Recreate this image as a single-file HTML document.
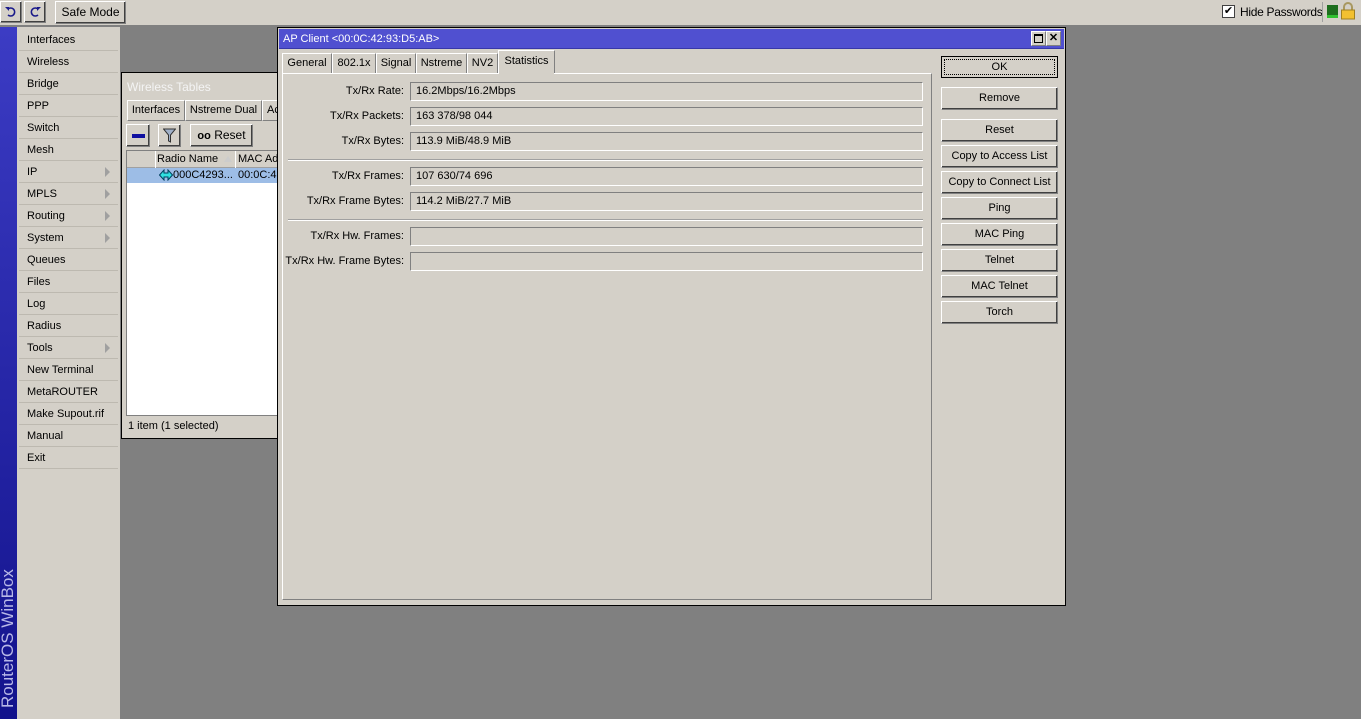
<!DOCTYPE html>
<html><head><meta charset="utf-8"><style>
*{box-sizing:border-box;margin:0;padding:0}
body{width:1361px;height:719px;overflow:hidden;background:#808080;font-family:"Liberation Sans",sans-serif;font-size:11px;color:#000;position:relative}
.abs{position:absolute}
.btn{position:absolute;background:#d4d0c8;border:1px solid;border-color:#fff #808080 #808080 #fff;box-shadow:inset -1px -1px 0 #404040;text-align:center;line-height:19px;white-space:nowrap}
.face{background:#d4d0c8}
.sunk{position:absolute;border:1px solid;border-color:#808080 #fff #fff #808080;background:#d4d0c8;padding-left:5px;line-height:16px;height:19px}
.lbl{position:absolute;text-align:right;width:200px;line-height:18px;white-space:nowrap}
.menu div{height:22px;line-height:22px;padding-left:8px;border-bottom:1px solid #bdb9b0;position:relative}
.menu span.ar{position:absolute;right:8px;top:6px;width:0;height:0;border-left:5px solid #a0a0a0;border-top:5px solid transparent;border-bottom:5px solid transparent}
.tab{position:absolute;border:1px solid;border-color:#fff #808080 #808080 #fff;line-height:19px;height:21px;background:#d4d0c8;text-align:center;white-space:nowrap;overflow:hidden}
</style></head><body>
<!-- top bar -->
<div class="abs face" style="left:0;top:0;width:1361px;height:26px;border-bottom:1px solid #808080"></div>
<div class="btn" style="left:0;top:1px;width:22px;height:22px"><svg width="14" height="14" viewBox="0 0 14 14" style="margin-top:3px"><path d="M4 4 A4 4 0 1 1 4 10" fill="none" stroke="#1a1a8a" stroke-width="1.6"/><path d="M1 2 L5 2 L5 6 Z" fill="#1a1a8a"/></svg></div>
<div class="btn" style="left:24px;top:1px;width:22px;height:22px"><svg width="14" height="14" viewBox="0 0 14 14" style="margin-top:3px"><path d="M10 4 A4 4 0 1 0 10 10" fill="none" stroke="#1a1a8a" stroke-width="1.6"/><path d="M13 2 L9 2 L9 6 Z" fill="#1a1a8a"/></svg></div>
<div class="btn" style="left:55px;top:1px;width:71px;height:23px;line-height:21px;font-size:12px">Safe Mode</div>
<div class="abs" style="left:1222px;top:5px;width:13px;height:13px;border:1px solid #404040;background:#fff;font-size:11px;line-height:11px;text-align:center">&#10004;</div>
<div class="abs" style="left:1240px;top:5px;font-size:12px;letter-spacing:-0.3px">Hide Passwords</div>
<div class="abs" style="left:1322px;top:2px;width:1px;height:20px;background:#a0a0a0"></div>
<div class="abs" style="left:1327px;top:5px;width:11px;height:13px;background:#1e6e1e;border-bottom:3px solid #30c030"></div>
<svg class="abs" style="left:1340px;top:2px" width="16" height="18" viewBox="0 0 16 18"><path d="M4 8 V5 A4 4 0 0 1 12 5 V8" fill="none" stroke="#a89860" stroke-width="2"/><rect x="1.5" y="8" width="13" height="9" fill="#f2c030" stroke="#a08020"/></svg>
<!-- side strip -->
<div class="abs" style="left:0;top:27px;width:17px;height:692px;background:linear-gradient(#3c3cc4,#12128c)"></div>
<div class="abs" style="left:-4px;top:708px;transform:rotate(-90deg);transform-origin:0 0;color:#b8b8e8;font-size:17px;white-space:nowrap;width:200px;line-height:24px">RouterOS WinBox</div>
<!-- menu -->
<div class="abs face menu" style="left:17px;top:27px;width:104px;height:692px;padding:2px 2px 0 2px;border-right:1px solid #808080">
<div>Interfaces</div><div>Wireless</div><div>Bridge</div><div>PPP</div><div>Switch</div><div>Mesh</div><div>IP<span class="ar"></span></div><div>MPLS<span class="ar"></span></div><div>Routing<span class="ar"></span></div><div>System<span class="ar"></span></div><div>Queues</div><div>Files</div><div>Log</div><div>Radius</div><div>Tools<span class="ar"></span></div><div>New Terminal</div><div>MetaROUTER</div><div>Make Supout.rif</div><div>Manual</div><div>Exit</div>
</div>
<!-- wireless tables -->
<div class="abs face" style="left:121px;top:72px;width:170px;height:367px;border:1px solid #000;border-right:none">
 <div class="abs" style="left:5px;top:7px;color:#f4f4f4;font-size:12px">Wireless Tables</div>
 <div class="tab" style="left:5px;top:27px;width:58px">Interfaces</div>
 <div class="tab" style="left:63px;top:27px;width:77px">Nstreme Dual</div>
 <div class="tab" style="left:140px;top:27px;width:20px;text-align:left;padding-left:4px">Ac</div>
 <div class="btn" style="left:4px;top:51px;width:24px;height:23px"><div style="margin:9px auto;width:13px;height:4px;background:#1010a0"></div></div>
 <div class="btn" style="left:36px;top:51px;width:23px;height:23px"><svg width="13" height="15" viewBox="0 0 13 15" style="margin-top:3px"><path d="M0.5 1 H12.5 L7.5 7 V14 L5.5 13 V7 Z" fill="#a0b0c8" stroke="#303030"/></svg></div>
 <div class="btn" style="left:68px;top:51px;width:63px;height:23px;line-height:21px;font-size:12px"><b style="font-size:11px">oo</b> Reset</div>
 <div class="abs" style="left:4px;top:77px;width:160px;height:266px;background:#fff;border:1px solid #808080"></div>
 <div class="abs" style="left:5px;top:78px;width:160px;height:17px;background:#d4d0c8;border-bottom:1px solid #a0a0a0"></div>
 <div class="abs" style="left:33px;top:78px;width:1px;height:33px;background:#fff"></div>
 <div class="abs" style="left:35px;top:80px">Radio Name</div>
 <div class="abs" style="left:102px;top:83px;width:0;height:0;border-left:4px solid transparent;border-right:4px solid transparent;border-bottom:6px solid #ccc"></div>
 <div class="abs" style="left:113px;top:78px;width:1px;height:33px;background:#fff"></div>
 <div class="abs" style="left:116px;top:80px">MAC Add</div>
 <div class="abs" style="left:5px;top:95px;width:160px;height:15px;background:#9dbde6"></div>
 <svg class="abs" style="left:37px;top:96px" width="14" height="12" viewBox="0 0 14 12"><path d="M0.5 6 L5 1 V4 H9 V1 L13.5 6 L9 11 V8 H5 V11 Z" fill="#30e0e0" stroke="#004060"/></svg>
 <div class="abs" style="left:51px;top:96px">000C4293...</div>
 <div class="abs" style="left:116px;top:96px">00:0C:42</div>
 <div class="abs" style="left:6px;top:347px">1 item (1 selected)</div>
</div>
<!-- AP client -->
<div class="abs face" style="left:277px;top:27px;width:789px;height:579px;border:1px solid #000">
 <div class="abs" style="left:1px;top:1px;width:785px;height:20px;background:#5050d0;border-bottom:1px solid #3838a8"></div>
 <div class="abs" style="left:5px;top:5px;color:#fff">AP Client &lt;00:0C:42:93:D5:AB&gt;</div>
 <div class="btn" style="left:753px;top:3px;width:15px;height:15px;box-shadow:none"><div style="margin:2px auto;width:9px;height:9px;border:1px solid #000;border-top-width:2px"></div></div>
 <div class="btn" style="left:768px;top:3px;width:15px;height:15px;line-height:13px;font-size:11px;font-weight:bold;box-shadow:none">&#x2715;</div>
 <div class="tab" style="left:4px;top:25px;width:50px">General</div>
 <div class="tab" style="left:54px;top:25px;width:44px">802.1x</div>
 <div class="tab" style="left:98px;top:25px;width:40px">Signal</div>
 <div class="tab" style="left:138px;top:25px;width:51px">Nstreme</div>
 <div class="tab" style="left:189px;top:25px;width:31px">NV2</div>
 <div class="tab" style="left:220px;top:22px;width:57px;height:24px;border-bottom:none;line-height:20px">Statistics</div>
 <div class="abs" style="left:4px;top:45px;width:650px;height:527px;border:1px solid;border-color:#fff #808080 #808080 #fff"></div>
 <div class="abs" style="left:221px;top:45px;width:55px;height:2px;background:#d4d0c8"></div>
 <div class="lbl" style="left:-74px;top:54px">Tx/Rx Rate:</div><div class="sunk" style="left:132px;top:54px;width:513px">16.2Mbps/16.2Mbps</div>
 <div class="lbl" style="left:-74px;top:79px">Tx/Rx Packets:</div><div class="sunk" style="left:132px;top:79px;width:513px">163 378/98 044</div>
 <div class="lbl" style="left:-74px;top:104px">Tx/Rx Bytes:</div><div class="sunk" style="left:132px;top:104px;width:513px">113.9 MiB/48.9 MiB</div>
 <div class="abs" style="left:10px;top:131px;width:635px;height:2px;border-top:1px solid #a0a0a0;border-bottom:1px solid #fff"></div>
 <div class="lbl" style="left:-74px;top:139px">Tx/Rx Frames:</div><div class="sunk" style="left:132px;top:139px;width:513px">107 630/74 696</div>
 <div class="lbl" style="left:-74px;top:164px">Tx/Rx Frame Bytes:</div><div class="sunk" style="left:132px;top:164px;width:513px">114.2 MiB/27.7 MiB</div>
 <div class="abs" style="left:10px;top:191px;width:635px;height:2px;border-top:1px solid #a0a0a0;border-bottom:1px solid #fff"></div>
 <div class="lbl" style="left:-74px;top:199px">Tx/Rx Hw. Frames:</div><div class="sunk" style="left:132px;top:199px;width:513px"></div>
 <div class="lbl" style="left:-74px;top:224px">Tx/Rx Hw. Frame Bytes:</div><div class="sunk" style="left:132px;top:224px;width:513px"></div>
 <div class="btn" style="left:663px;top:28px;width:117px;height:22px;border:1px solid #000;box-shadow:none;outline:1px dotted #000;outline-offset:-4px;line-height:20px">OK</div>
 <div class="btn" style="left:663px;top:59px;width:117px;height:23px;line-height:21px">Remove</div>
 <div class="btn" style="left:663px;top:91px;width:117px;height:23px;line-height:21px">Reset</div>
 <div class="btn" style="left:663px;top:117px;width:117px;height:23px;line-height:21px">Copy to Access List</div>
 <div class="btn" style="left:663px;top:143px;width:117px;height:23px;line-height:21px">Copy to Connect List</div>
 <div class="btn" style="left:663px;top:169px;width:117px;height:23px;line-height:21px">Ping</div>
 <div class="btn" style="left:663px;top:195px;width:117px;height:23px;line-height:21px">MAC Ping</div>
 <div class="btn" style="left:663px;top:221px;width:117px;height:23px;line-height:21px">Telnet</div>
 <div class="btn" style="left:663px;top:247px;width:117px;height:23px;line-height:21px">MAC Telnet</div>
 <div class="btn" style="left:663px;top:273px;width:117px;height:23px;line-height:21px">Torch</div>
</div>
</body></html>
